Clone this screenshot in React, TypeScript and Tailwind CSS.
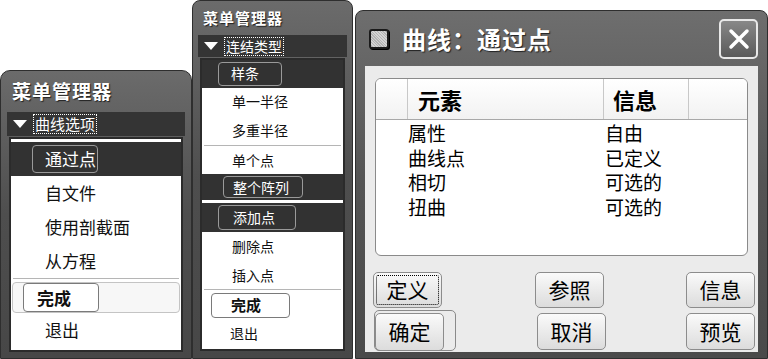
import React from 'react'

function Tri() {
  return (
    <svg width="16" height="10" viewBox="0 0 16 10" className="shrink-0">
      <path d="M1 1 L15 1 L8 9 Z" fill="#fff" />
    </svg>
  )
}

function Hi({ label, h, box, boxLeft, text }: { label: string; h: string; box: string; boxLeft: string; text: string }) {
  return (
    <div className={`${h} bg-[#323232] flex items-center`}>
      <div className={`${boxLeft} ${box} h-[85%] border border-[#9a9a9a] rounded-[4px] flex items-center text-white ${text}`}>
        {label}
      </div>
    </div>
  )
}

function Btn({ label, className = '' }: { label: string; className?: string }) {
  return (
    <div
      className={`w-[69px] h-[36px] rounded-[5px] border border-[#8c8c8c] bg-gradient-to-b from-[#fafafa] to-[#dcdcdc] flex items-center justify-center text-[21px] text-black ${className}`}
    >
      {label}
    </div>
  )
}

export default function App() {
  return (
    <div className="w-[768px] h-[359px] bg-white flex items-end overflow-hidden font-['Noto_Sans_CJK_SC','Noto_Sans',sans-serif]">
      {/* Panel 1 */}
      <div className="w-[192px] h-[289px] shrink-0 rounded-t-[10px] bg-gradient-to-b from-[#6b6b6b] via-[#4e4e4e] to-[#474747] border border-[#2e2e2e] flex flex-col px-[8px] pb-[6px]">
        <div className="h-[41px] flex items-center pl-[3px] text-white font-bold text-[19px] tracking-[1px] [text-shadow:1px_1px_1px_#222]">菜单管理器</div>
        <div className="h-[24px] -mx-[2px] bg-[#343434] flex items-center gap-[5px] pl-[5px]">
          <Tri />
          <span className="border border-dotted border-white text-white text-[15px] leading-[18px] px-[1px]">曲线选项</span>
        </div>
        <div className="flex-1 mt-[1px] bg-white border-2 border-[#2b2b2b] flex flex-col pt-[3px] text-[17px] text-[#111]">
          <Hi label="通过点" h="h-[34px]" boxLeft="ml-[21px]" box="w-[66px] pl-[12px]" text="text-[17px]" />
          <div className="h-[34px] flex items-center pl-[34px]">自文件</div>
          <div className="h-[34px] flex items-center pl-[34px]">使用剖截面</div>
          <div className="h-[34px] flex items-center pl-[34px]">从方程</div>
          <div className="h-[1px] bg-[#b5b5b5] mx-[2px]" />
          <div className="mt-[3px] mx-[1px] h-[31px] rounded-[4px] border border-[#c4c4c4] bg-[#f7f7f7] flex items-center">
            <div className="ml-[10px] w-[76px] h-[29px] rounded-[4px] border border-[#7a7a7a] bg-white flex items-center pl-[13px] font-bold text-[17px]">完成</div>
          </div>
          <div className="h-[34px] flex items-center pl-[34px]">退出</div>
        </div>
      </div>

      {/* Panel 2 */}
      <div className="w-[161px] h-[359px] shrink-0 rounded-t-[8px] bg-gradient-to-b from-[#6b6b6b] via-[#4e4e4e] to-[#474747] border border-[#2e2e2e] flex flex-col px-[7px] pb-[7px]">
        <div className="h-[34px] flex items-center pl-[3px] text-white font-bold text-[15px] tracking-[1px] [text-shadow:1px_1px_1px_#222]">菜单管理器</div>
        <div className="h-[22px] -mx-[2px] bg-[#343434] flex items-center gap-[5px] pl-[5px]">
          <Tri />
          <span className="border border-dotted border-white text-white text-[14px] leading-[17px] px-[1px]">连结类型</span>
        </div>
        <div className="flex-1 mt-[1px] bg-white border-2 border-[#2b2b2b] flex flex-col text-[14px] text-[#111]">
          <Hi label="样条" h="h-[28px]" boxLeft="ml-[16px]" box="w-[64px] pl-[12px]" text="text-[14px]" />
          <div className="h-[27px] flex items-center pl-[30px]">单一半径</div>
          <div className="h-[30px] flex items-center pl-[30px]">多重半径</div>
          <div className="h-[1px] bg-[#b5b5b5] mx-[2px]" />
          <div className="h-[28px] flex items-center pl-[30px]">单个点</div>
          <Hi label="整个阵列" h="h-[26px]" boxLeft="ml-[21px]" box="w-[80px] pl-[9px]" text="text-[14px]" />
          <div className="h-[3px]" />
          <Hi label="添加点" h="h-[29px]" boxLeft="ml-[16px]" box="w-[78px] pl-[14px]" text="text-[14px]" />
          <div className="h-[29px] flex items-center pl-[30px]">删除点</div>
          <div className="h-[28px] flex items-center pl-[30px]">插入点</div>
          <div className="h-[1px] bg-[#b5b5b5] mx-[2px]" />
          <div className="mt-[2px] h-[26px] flex items-center">
            <div className="ml-[9px] w-[79px] h-[25px] rounded-[4px] border border-[#7a7a7a] bg-white flex items-center pl-[19px] font-bold text-[15px]">完成</div>
          </div>
          <div className="h-[31px] flex items-center pl-[28px]">退出</div>
        </div>
      </div>

      <div className="w-[2px] shrink-0" />

      {/* Panel 3 */}
      <div className="w-[413px] h-[349px] shrink-0 rounded-t-[8px] bg-gradient-to-b from-[#6e6e6e] via-[#545454] to-[#4a4a4a] border border-[#2e2e2e] flex flex-col px-[9px] pb-[6px]">
        <div className="h-[55px] flex items-center">
          <div className="ml-[4px] w-[20px] h-[20px] border-2 border-[#1a1a1a] rounded-[3px] bg-[#c8c8c8] bg-[repeating-linear-gradient(45deg,#d4d4d4_0px,#d4d4d4_1px,#b4b4b4_1px,#b4b4b4_2px)] shadow-[1px_1px_0_#000]" />
          <span className="ml-[13px] text-white font-bold text-[24px] tracking-[1px] [text-shadow:1px_1px_1px_#222]">曲线：通过点</span>
          <div className="ml-auto mr-[0px] w-[39px] h-[40px] rounded-[5px] border-2 border-[#e8e8e8] bg-gradient-to-b from-[#888] to-[#5a5a5a] flex items-center justify-center">
            <svg width="24" height="24" viewBox="0 0 24 24">
              <path d="M4 4 L20 20 M20 4 L4 20" stroke="#fff" strokeWidth="3.5" strokeLinecap="round" />
            </svg>
          </div>
        </div>
        <div className="flex-1 bg-[#ebebeb] flex flex-col pt-[12px] pr-[3px]">
          <div className="ml-[10px] w-[373px] h-[178px] rounded-[6px] border border-[#8a8a8a] bg-white flex flex-col overflow-hidden">
            <div className="h-[41px] shrink-0 flex border-b border-[#a8a8a8] bg-gradient-to-b from-white to-[#f2f2f2] font-bold text-[22px] text-black">
              <div className="w-[32px] border-r border-[#c8c8c8]" />
              <div className="w-[196px] border-r border-[#c8c8c8] flex items-center pl-[10px]">元素</div>
              <div className="w-[85px] border-r border-[#c8c8c8] flex items-center pl-[9px]">信息</div>
              <div className="flex-1" />
            </div>
            <div className="flex pt-[1px] text-[19px] leading-[24.5px] text-black">
              <div className="w-[32px]" />
              <div className="w-[197px] flex flex-col">
                <span>属性</span>
                <span>曲线点</span>
                <span>相切</span>
                <span>扭曲</span>
              </div>
              <div className="flex flex-col">
                <span>自由</span>
                <span>已定义</span>
                <span>可选的</span>
                <span>可选的</span>
              </div>
            </div>
          </div>
          <div className="mt-[16px] flex">
            <Btn label="定义" className="ml-[8px] outline-1 outline-dotted outline-black -outline-offset-[4px]" />
            <Btn label="参照" className="ml-[93px]" />
            <Btn label="信息" className="ml-auto" />
          </div>
          <div className="mt-[5px] flex">
            <div className="relative ml-[10px]">
              <Btn label="确定" className="w-[67px] h-[38px]" />
              <span className="absolute -top-[3px] -left-[1px] w-[82px] h-[41px] rounded-[5px] border border-[#8a8a8a]" />
            </div>
            <Btn label="取消" className="ml-[93px] w-[69px] h-[37px]" />
            <Btn label="预览" className="ml-auto h-[37px]" />
          </div>
        </div>
      </div>
    </div>
  )
}
